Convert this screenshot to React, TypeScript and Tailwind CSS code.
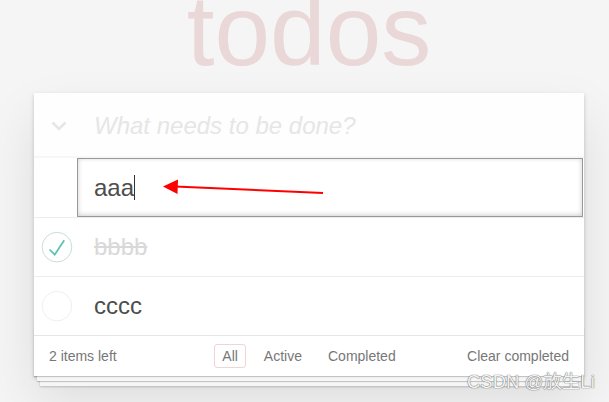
import React from 'react'

const CheckCircle = ({ done }: { done: boolean }) => (
  <svg width="40" height="40" viewBox="-10 -18 100 135" className="shrink-0">
    <circle cx="50" cy="50" r="50" fill="none" stroke={done ? '#bddad5' : '#ededed'} strokeWidth="3" />
    {done && <path fill="#5dc2af" d="M72 25L42 71 27 56l-4 4 20 20 34-52z" />}
  </svg>
)

const App = () => {
  const filters = ['All', 'Active', 'Completed']

  return (
    <div className="relative h-[402px] w-[609px] overflow-hidden bg-[#f5f5f5] font-['Liberation_Sans',Arial,sans-serif] text-[#4d4d4d]">
      <div className="ml-[34px] w-[550px]">
        <h1 className="h-[93px] text-center text-[100px] leading-[100px] font-thin text-[rgba(175,47,47,0.15)]">
          <span className="block -translate-y-[20px]">todos</span>
        </h1>

        <section className="bg-white shadow-[0_2px_4px_0_rgba(0,0,0,0.2),0_25px_50px_0_rgba(0,0,0,0.1)]">
          {/* new todo */}
          <div className="flex h-[65px] items-center bg-[rgba(0,0,0,0.003)] shadow-[inset_0_-2px_1px_rgba(0,0,0,0.03)]">
            <div className="w-[60px] pl-[17px]">
              <svg width="16" height="10" viewBox="0 0 16 10">
                <path d="M1.5 1.5 L8 8 L14.5 1.5" fill="none" stroke="#e6e6e6" strokeWidth="2.6" />
              </svg>
            </div>
            <span className="text-[24px] italic leading-[33.6px] text-[#e6e6e6]">What needs to be done?</span>
          </div>

          <ul>
            {/* editing row */}
            <li className="border-b border-[#ededed]">
              <div className="ml-[43px] flex w-[506px] items-center border border-[#999] px-4 py-3 text-[24px] leading-[33px] text-[#4d4d4d] shadow-[inset_0_-1px_5px_0_rgba(0,0,0,0.2)]">
                aaa
                <span className="inline-block h-[25px] w-px bg-[#333]" />
              </div>
            </li>
            <li className="flex items-center border-b border-[#ededed]">
              <div className="flex w-[60px] items-center">
                <CheckCircle done />
              </div>
              <span className="py-[15px] text-[24px] leading-[28px] text-[#d9d9d9] line-through">bbbb</span>
            </li>
            <li className="flex items-center">
              <div className="flex w-[60px] items-center">
                <CheckCircle done={false} />
              </div>
              <span className="py-[15px] text-[24px] leading-[28px] text-[#4d4d4d]">cccc</span>
            </li>
          </ul>

          <footer className="relative grid grid-cols-[1fr_auto_1fr] items-center border-t border-[#e6e6e6] px-[15px] py-[10px] text-[14px] leading-[20px] text-[#777]">
            <div className="pointer-events-none absolute inset-x-0 bottom-0 h-[50px] shadow-[0_1px_1px_rgba(0,0,0,0.2),0_8px_0_-3px_#f6f6f6,0_9px_1px_-3px_rgba(0,0,0,0.2),0_16px_0_-6px_#f6f6f6,0_17px_2px_-6px_rgba(0,0,0,0.2)]" />
            <span className="relative">2 items left</span>
            <ul className="relative flex">
              {filters.map((f) => (
                <li key={f} className="mx-[5px]">
                  <a
                    className={
                      f === 'All'
                        ? 'rounded-[3px] border border-[rgba(175,47,47,0.2)] px-[7px] py-[3px]'
                        : 'rounded-[3px] border border-transparent px-[7px] py-[3px]'
                    }
                  >
                    {f}
                  </a>
                </li>
              ))}
            </ul>
            <span className="relative text-right">Clear completed</span>
          </footer>
        </section>
      </div>

      {/* annotation arrow */}
      <svg className="pointer-events-none absolute left-0 top-0" width="609" height="402">
        <line x1="323" y1="193" x2="175" y2="186.5" stroke="#ff0000" strokeWidth="2" />
        <polygon points="163,186.5 178,179.5 177.5,194" fill="#ff0000" />
      </svg>

      {/* watermark */}
      <span className="absolute left-[467px] top-[370px] text-[18.5px] leading-[24px] text-[#f4f4f4] [text-shadow:0_0_1px_#666,0_0_1px_#666] font-['Liberation_Sans','Noto_Sans_CJK_SC',sans-serif]">
        CSDN @放生Li
      </span>
    </div>
  )
}

export default App
